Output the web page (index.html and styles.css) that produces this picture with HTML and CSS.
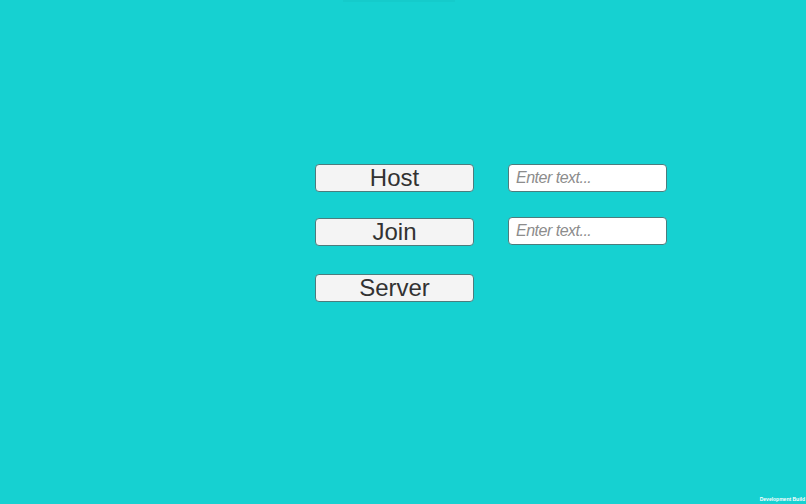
FILE: index.html
```html
<!DOCTYPE html>
<html>
<head>
<meta charset="utf-8">
<link rel="stylesheet" href="styles.css">
</head>
<body>
<div class="topbar"></div>
<main class="menu">
  <div class="buttons">
    <button class="btn">Host</button>
    <button class="btn btn-join">Join</button>
    <button class="btn btn-server">Server</button>
  </div>
  <div class="fields">
    <input class="field" type="text" placeholder="Enter text...">
    <input class="field" type="text" placeholder="Enter text...">
  </div>
</main>
<div class="devbuild">Development Build</div>
</body>
</html>
```
FILE: styles.css
```css
html, body {
  margin: 0;
  padding: 0;
  width: 806px;
  height: 504px;
  overflow: hidden;
}
body {
  background: #16d1d1;
  font-family: "Liberation Sans", Arial, sans-serif;
  position: relative;
}
.topbar {
  width: 112px;
  height: 2px;
  margin-left: 343px;
  background: rgba(0, 60, 60, 0.035);
}
.menu {
  display: flex;
  gap: 34px;
  padding-top: 162px;
  padding-left: 315px;
}
.buttons {
  display: flex;
  flex-direction: column;
}
.btn {
  box-sizing: border-box;
  width: 159px;
  height: 28px;
  margin: 0;
  padding: 0;
  background: #f4f4f4;
  border: 1px solid #4d7c7d;
  border-radius: 4px;
  color: #323232;
  font-family: "Liberation Sans", Arial, sans-serif;
  font-size: 24px;
  line-height: 26px;
  text-align: center;
}
.btn-join {
  margin-top: 26px;
}
.btn-server {
  margin-top: 28px;
}
.fields {
  display: flex;
  flex-direction: column;
  gap: 25px;
}
.field {
  box-sizing: border-box;
  width: 159px;
  height: 28px;
  margin: 0;
  padding: 0 0 0 7px;
  background: #ffffff;
  border: 1px solid #4d7c7d;
  border-radius: 4px;
  font-family: "Liberation Sans", Arial, sans-serif;
  font-size: 16px;
  letter-spacing: -0.5px;
  font-style: italic;
  color: #323232;
  outline: none;
}
.field::placeholder {
  color: #8c8c8c;
  font-style: italic;
}
.devbuild {
  position: absolute;
  right: 1px;
  bottom: 2px;
  font-family: "Liberation Sans", Arial, sans-serif;
  font-size: 5px;
  font-weight: bold;
  color: #ffffff;
  line-height: 6px;
}
```
